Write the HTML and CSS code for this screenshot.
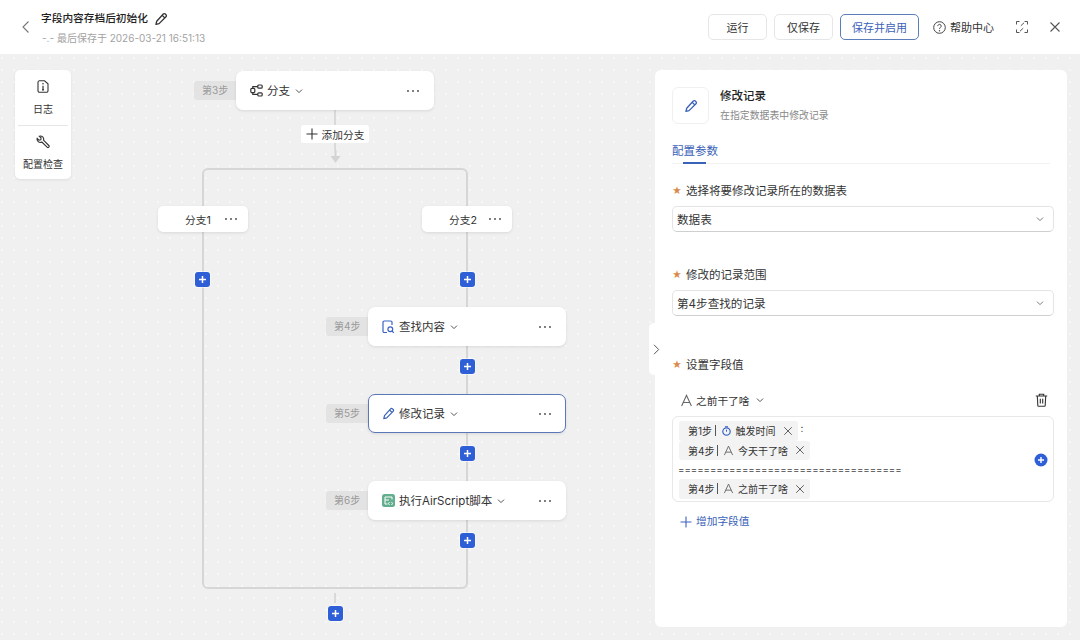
FILE: index.html
```html
<!DOCTYPE html>
<html lang="zh">
<head>
<meta charset="utf-8">
<title>字段内容存档后初始化</title>
<link rel="stylesheet" href="styles.css">
</head>
<body>
<svg class="defs" width="0" height="0">
  <symbol id="pen" viewBox="0 0 16 16"><path d="M10.600 2.300a1.600 1.600 0 0 1 2.300 0l.8.8a1.600 1.600 0 0 1 0 2.300l-7.900 7.900-3.600.9.9-3.600zM9.300 3.700l3 3" fill="none" stroke="currentColor" stroke-width="1.500" stroke-linejoin="round"/></symbol>
  <symbol id="chev" viewBox="0 0 10 10"><path d="M2 3.600l3 3 3-3" fill="none" stroke="currentColor" stroke-width="1"/></symbol>
  <symbol id="dots" viewBox="0 0 14 4"><circle cx="2" cy="2" r=".9" fill="currentColor"/><circle cx="7" cy="2" r=".9" fill="currentColor"/><circle cx="12" cy="2" r=".9" fill="currentColor"/></symbol>
  <symbol id="plus" viewBox="0 0 15 15"><path d="M7.500 4v7M4 7.500h7" stroke="#fff" stroke-width="1.500" fill="none"/></symbol>
  <symbol id="x" viewBox="0 0 12 12"><path d="M1.500 1.500l9 9M10.500 1.500l-9 9" stroke="currentColor" stroke-width="1.100" fill="none"/></symbol>
  <symbol id="a" viewBox="0 0 12 12"><path d="M1.500 11L6 1.200 10.500 11M3 7.800h6" stroke="currentColor" stroke-width="1" fill="none"/></symbol>
</svg>
<header class="topbar">
  <div class="top-left">
    <svg class="back" width="10" height="14" viewBox="0 0 10 14"><path d="M7.500 1.500L2 7l5.500 5.500" fill="none" stroke="#777" stroke-width="1.100"/></svg>
    <div class="title-block">
      <div class="title-row"><span class="title">字段内容存档后初始化</span><svg class="ico-pen" width="14" height="14"><use href="#pen"/></svg></div>
      <div class="saved">-.- 最后保存于 2026-03-21 16:51:13</div>
    </div>
  </div>
  <div class="top-right">
    <button class="btn btn-sm">运行</button>
    <button class="btn btn-sm">仅保存</button>
    <button class="btn btn-primary">保存并启用</button>
    <div class="help">
      <svg width="13" height="13" viewBox="0 0 13 13"><circle cx="6.500" cy="6.500" r="5.800" fill="none" stroke="#444" stroke-width="1"/><path d="M4.800 5.100a1.700 1.700 0 1 1 2.600 1.400c-.6.400-.9.700-.9 1.400" fill="none" stroke="#444" stroke-width="1"/><circle cx="6.500" cy="9.700" r=".7" fill="#444"/></svg>
      <span>帮助中心</span>
    </div>
    <svg class="expand" width="12" height="12" viewBox="0 0 12 12"><path d="M.5 3.500V.5h3M8.500.5h3v3M11.500 8.500v3h-3M3.500 11.500h-3v-3M4.800 4.800L8 1.800M7.200 7.200L4 10.200" fill="none" stroke="#555" stroke-width="1"/></svg>
    <svg class="close" width="12" height="12"><use href="#x"/></svg>
  </div>
</header>

<main class="work">
  <div class="canvas">
    <i class="line l-a"></i><i class="line l-b"></i>
    <svg class="arrow" width="11" height="13" viewBox="0 0 11 13"><path d="M5.500 0v7" stroke="#d4d4d4" stroke-width="2"/><path d="M.5 6h10l-5 7z" fill="#d4d4d4"/></svg>
    <i class="loop"></i>
    <i class="line l-c"></i>

    <div class="step s3"><span class="step-label">第3步</span><div class="card">
      <svg class="node-ico" width="13" height="13" viewBox="0 0 13 13"><g fill="none" stroke="#333" stroke-width="1.200"><rect x=".8" y="4.300" width="4" height="4.400" rx="1.200"/><rect x="7.800" y="1" width="4.400" height="3.200" rx="1"/><rect x="7.800" y="8.800" width="4.400" height="3.200" rx="1"/><path d="M2.800 4.300V2.600h5M2.800 8.700v1.700h5"/></g></svg>
      <span class="node-text">分支</span><svg class="chev" width="10" height="10"><use href="#chev"/></svg><svg class="more" width="14" height="4"><use href="#dots"/></svg></div></div>

    <div class="add-branch"><svg width="12" height="12" viewBox="0 0 12 12"><path d="M6 .5v11M.5 6h11" stroke="#333" stroke-width="1.100"/></svg><span>添加分支</span></div>

    <div class="branch b1"><span>分支1</span><svg class="more" width="14" height="4"><use href="#dots"/></svg></div>
    <div class="branch b2"><span>分支2</span><svg class="more" width="14" height="4"><use href="#dots"/></svg></div>

    <svg class="add p1" width="15" height="15"><use href="#plus"/></svg>
    <svg class="add p2" width="15" height="15"><use href="#plus"/></svg>
    <svg class="add p3" width="15" height="15"><use href="#plus"/></svg>
    <svg class="add p4" width="15" height="15"><use href="#plus"/></svg>
    <svg class="add p5" width="15" height="15"><use href="#plus"/></svg>
    <svg class="add p6" width="15" height="15"><use href="#plus"/></svg>

    <div class="step s4"><span class="step-label">第4步</span><div class="card">
      <svg class="node-ico" width="13" height="14" viewBox="0 0 13 14"><path d="M5 12.500H2.300a1.300 1.300 0 0 1-1.300-1.300V2.300A1.300 1.300 0 0 1 2.300 1h6.400A1.300 1.300 0 0 1 10 2.300V5" fill="none" stroke="#3a62c4" stroke-width="1.200"/><circle cx="8.300" cy="9.300" r="2.400" fill="none" stroke="#3a62c4" stroke-width="1.200"/><path d="M10 11l1.800 1.800" stroke="#3a62c4" stroke-width="1.200"/></svg>
      <span class="node-text">查找内容</span><svg class="chev" width="10" height="10"><use href="#chev"/></svg><svg class="more" width="14" height="4"><use href="#dots"/></svg></div></div>

    <div class="step s5"><span class="step-label">第5步</span><div class="card card-active">
      <svg class="node-ico ico-blue" width="13" height="13"><use href="#pen"/></svg>
      <span class="node-text">修改记录</span><svg class="chev" width="10" height="10"><use href="#chev"/></svg><svg class="more" width="14" height="4"><use href="#dots"/></svg></div></div>

    <div class="step s6"><span class="step-label">第6步</span><div class="card">
      <svg class="node-ico" width="13" height="13" viewBox="0 0 13 13"><rect width="13" height="13" rx="2.500" fill="#62ae8e"/><path d="M3 3h7v2.500M3 3v7h2.500M3 6h4" fill="none" stroke="#fff" stroke-width="1"/><path d="M7.500 8l-1 1.500 1 1.500M9.500 8l1 1.500-1 1.500" fill="none" stroke="#fff" stroke-width=".9"/></svg>
      <span class="node-text">执行AirScript脚本</span><svg class="chev" width="10" height="10"><use href="#chev"/></svg><svg class="more" width="14" height="4"><use href="#dots"/></svg></div></div>
  </div>

  <aside class="tools">
    <div class="tool">
      <svg width="12" height="13" viewBox="0 0 12 13"><path d="M2.300.8h5.200L11 3.800v7a1.500 1.500 0 0 1-1.500 1.500h-7A1.500 1.500 0 0 1 1 10.800V2.300A1.500 1.500 0 0 1 2.300.8z" fill="none" stroke="#333" stroke-width="1.100"/><path d="M6 5.800v4M5 9.800h2" stroke="#333" stroke-width="1.200" fill="none"/><circle cx="6" cy="3.800" r=".8" fill="#333"/></svg>
      <span>日志</span>
    </div>
    <div class="tool">
      <svg width="14" height="14" viewBox="0 0 14 14"><path d="M1.200 3.300L3 5.100l1.800-.3L5.100 3 3.300 1.200a3.200 3.200 0 0 1 4.200 4l5.300 5.300a1.200 1.200 0 0 1-1.700 1.700L5.800 7A3.200 3.200 0 0 1 1.200 3.300z" fill="none" stroke="#333" stroke-width="1.100"/></svg>
      <span>配置检查</span>
    </div>
  </aside>

  <section class="panel">
    <div class="handle"><svg width="7" height="11" viewBox="0 0 7 11"><path d="M1 .8l4.700 4.700L1 10.200" fill="none" stroke="#555" stroke-width="1"/></svg></div>
    <div class="panel-head">
      <div class="panel-ico"><svg class="ico-blue" width="14" height="14"><use href="#pen"/></svg></div>
      <div>
        <div class="panel-title">修改记录</div>
        <div class="panel-sub">在指定数据表中修改记录</div>
      </div>
    </div>
    <div class="tabs"><span class="tab">配置参数</span></div>

    <div class="field-label"><i class="star">★</i>选择将要修改记录所在的数据表</div>
    <div class="select"><span>数据表</span><svg width="10" height="10"><use href="#chev"/></svg></div>

    <div class="field-label"><i class="star">★</i>修改的记录范围</div>
    <div class="select"><span>第4步查找的记录</span><svg width="10" height="10"><use href="#chev"/></svg></div>

    <div class="field-label"><i class="star">★</i>设置字段值</div>
    <div class="field-row">
      <svg class="a-ico" width="13" height="13"><use href="#a"/></svg>
      <span class="field-name">之前干了啥</span>
      <svg class="chev" width="10" height="10"><use href="#chev"/></svg>
      <svg class="trash" width="13" height="14" viewBox="0 0 13 14"><path d="M.8 3h11.400M4.300 3V1.200h4.400V3M2.300 3l.5 9.500a.8.8 0 0 0 .8.8h5.800a.8.8 0 0 0 .8-.8l.5-9.500M5.300 5.800v4.700M7.700 5.800v4.700" fill="none" stroke="#333" stroke-width="1.100"/></svg>
    </div>
    <div class="expr">
      <div class="expr-line">
        <span class="tag">第1步<b></b><svg class="clock" width="9" height="10" viewBox="0 0 9 10"><circle cx="4.500" cy="5.500" r="3.700" fill="none" stroke="#3a62c4" stroke-width="1.200"/><path d="M3 .7h3M4.500 3.700v2" stroke="#3a62c4" stroke-width="1"/></svg><em class="em-time">触发时间</em><svg class="tag-x" width="10" height="10"><use href="#x"/></svg></span><span class="colon">:</span>
      </div>
      <div class="expr-line"><span class="tag">第4步<b></b><svg class="a-ico" width="11" height="11"><use href="#a"/></svg><em>今天干了啥</em><svg class="tag-x" width="10" height="10"><use href="#x"/></svg></span></div>
      <div class="equals">===================================</div>
      <div class="expr-line"><span class="tag">第4步<b></b><svg class="a-ico" width="11" height="11"><use href="#a"/></svg><em>之前干了啥</em><svg class="tag-x" width="10" height="10"><use href="#x"/></svg></span></div>
      <svg class="expr-add" width="14" height="14" viewBox="0 0 14 14"><circle cx="7" cy="7" r="6.500" fill="#2f5fd6"/><path d="M7 4v6M4 7h6" stroke="#fff" stroke-width="1.400"/></svg>
    </div>
    <div class="add-field"><svg width="12" height="12" viewBox="0 0 12 12"><path d="M6 .5v11M.5 6h11" stroke="#3a62c4" stroke-width="1.100"/></svg><span>增加字段值</span></div>
  </section>
</main>
</body>
</html>
```

FILE: styles.css
```css
* { box-sizing: border-box; }
html, body { margin: 0; height: 100%; }
body {
  width: 1080px;
  height: 640px;
  overflow: hidden;
  font-family: Inter, "Noto Sans CJK SC", sans-serif;
  color: #333;
  background: #f0f0f0;
  display: flex;
  flex-direction: column;
}
.defs { position: absolute; }
i, em { font-style: normal; }

.topbar {
  height: 54px;
  flex: none;
  background: #fff;
  display: flex;
  justify-content: space-between;
  align-items: center;
  padding: 0 19px 0 21px;
}
.top-left { display: flex; align-items: center; gap: 10px; }
.back { display: block; }
.title-block { display: flex; flex-direction: column; gap: 5px; margin-top: 3px; }
.title-row { display: flex; align-items: center; gap: 6px; height: 14px; }
.title { font-size: 10.700px; font-weight: 500; color: #222; line-height: 14px; }
.ico-pen { color: #333; }
.saved { font-size: 10px; color: #a3a3a3; line-height: 14px; padding-left: 1px; }
.top-right { display: flex; align-items: center; }
.btn {
  height: 26px;
  border: 1px solid #e6e6e6;
  border-radius: 5px;
  background: #fff;
  font: inherit;
  font-size: 11px;
  color: #333;
  padding: 0;
  margin-right: 7px;
}
.btn-sm { width: 59px; }
.btn-primary { width: 79px; color: #3a62b8; border-color: #5b7db9; margin-right: 14px; }
.help { display: flex; align-items: center; gap: 4px; font-size: 11px; color: #333; }
.expand { margin-left: 22px; }
.close { margin-left: 21px; color: #555; }

.work {
  position: relative;
  flex: 1;
  display: flex;
  justify-content: space-between;
  align-items: flex-start;
  padding: 16px 13px 13px 15px;
  background-color: #f0f0f0;
  background-image: radial-gradient(circle, #f7f7f7 0.8px, transparent 1.100px);
  background-size: 12px 12px;
  background-position: -4px -2px;
}

.tools {
  position: relative;
  width: 56px;
  background: #fff;
  border-radius: 5px;
  box-shadow: 0 1px 3px rgba(0,0,0,.08);
}
.tool {
  height: 55px;
  display: flex;
  flex-direction: column;
  align-items: center;
  padding-top: 10px;
  gap: 10px;
  font-size: 10px;
  line-height: 12px;
  color: #333;
}
.tool + .tool { border-top: 1px solid #e6e6e6; margin: 0 3px; height: 54px; padding-top: 9px; gap: 9px; }

.canvas { position: absolute; inset: 0; }
.line { position: absolute; width: 2px; background: #d9d9d9; }
.l-a { left: 334px; top: 56px; height: 15px; }
.l-b { left: 334px; top: 89px; height: 7px; }
.l-c { left: 334px; top: 539px; height: 10px; }
.arrow { position: absolute; left: 329.500px; top: 96px; }
.loop {
  position: absolute;
  left: 202px;
  top: 114px;
  width: 266px;
  height: 421px;
  border: 2px solid #d6d6d6;
  border-radius: 6px;
}

.step { position: absolute; display: flex; align-items: center; }
.s3 { left: 194px; top: 17px; }
.s4 { left: 326px; top: 253px; }
.s5 { left: 326px; top: 340px; }
.s6 { left: 326px; top: 427px; }
.step-label {
  width: 42px;
  height: 19px;
  padding-left: 8px;
  background: #e3e3e3;
  border-radius: 3px 0 0 3px;
  font-size: 10px;
  line-height: 19px;
  color: #9a9a9a;
}
.card {
  width: 198px;
  height: 39px;
  display: flex;
  align-items: center;
  padding: 0 14px;
  background: #fff;
  border-radius: 7px;
  box-shadow: 0 1px 3px rgba(0,0,0,.1);
}
.card-active { border: 1px solid #5a78b8; padding: 0 13px; }
.node-ico { flex: none; margin-right: 4px; }
.ico-blue { color: #3a62b8; }
.node-text { font-size: 11.500px; color: #333; line-height: 16px; }
.chev { flex: none; margin-left: 4px; color: #555; }
.more { flex: none; margin-left: auto; color: #444; }

.add-branch {
  position: absolute;
  left: 301px;
  top: 71px;
  width: 68px;
  height: 18px;
  display: flex;
  align-items: center;
  justify-content: center;
  gap: 4px;
  background: #fff;
  border-radius: 3px;
  font-size: 10.700px;
  color: #333;
}
.branch {
  position: absolute;
  top: 152px;
  width: 90px;
  height: 26px;
  display: flex;
  align-items: center;
  padding: 0 10px 0 27px;
  background: #fff;
  border-radius: 5px;
  box-shadow: 0 1px 3px rgba(0,0,0,.1);
  font-size: 10.700px;
  color: #333;
}
.b1 { left: 158px; }
.b2 { left: 422px; }
.add {
  position: absolute;
  background: #2f5fd6;
  border-radius: 3px;
  box-shadow: 0 0 0 1px rgba(255,255,255,.5);
}
.p1 { left: 195px; top: 218px; }
.p2 { left: 460px; top: 218px; }
.p3 { left: 460px; top: 305px; }
.p4 { left: 460px; top: 392px; }
.p5 { left: 460px; top: 479px; }
.p6 { left: 328px; top: 552px; }

.panel {
  position: relative;
  width: 412px;
  height: 557px;
  background: #fff;
  border-radius: 6px;
  padding: 17px 13px 0 17px;
}
.handle {
  position: absolute;
  left: -6px;
  top: 253px;
  width: 12px;
  height: 52px;
  display: flex;
  align-items: center;
  justify-content: center;
  padding-left: 2px;
  background: #fff;
  border-radius: 5px 0 0 5px;
}
.panel-head { display: flex; align-items: center; gap: 11px; }
.panel-ico {
  width: 37px;
  height: 37px;
  border: 1px solid #f0f0f0;
  border-radius: 6px;
  display: flex;
  align-items: center;
  justify-content: center;
}
.panel-title { font-size: 11.500px; font-weight: 500; color: #222; line-height: 15px; }
.panel-sub { font-size: 9.900px; color: #888; line-height: 14px; margin-top: 4px; }
.tabs {
  margin: 18px 4px 0 0;
  height: 22px;
  border-bottom: 1px solid #f2f2f2;
}
.tab {
  position: relative;
  display: block;
  width: 46px;
  font-size: 11.500px;
  line-height: 18px;
  color: #3a62b8;
}
.tab::after {
  content: "";
  position: absolute;
  left: 11px;
  top: 20px;
  width: 23px;
  height: 1.500px;
  background: #3a62b8;
}
.field-label {
  display: flex;
  align-items: center;
  height: 18px;
  margin-top: 17px;
  font-size: 11.500px;
  color: #333;
}
.star { width: 14px; font-size: 9.500px; padding-left: 0; color: #d98a4b; }
.select {
  margin-top: 7px;
  height: 26px;
  display: flex;
  align-items: center;
  justify-content: space-between;
  padding: 0 8px 0 4px;
  border: 1px solid #e4e4e4;
  border-bottom-color: #cfcfcf;
  border-radius: 5px;
  font-size: 11.600px;
  color: #333;
}
.select span { margin-top: -1px; }
.select svg { color: #777; }
.select + .field-label { margin-top: 33px; }
.select + .field-label + .select + .field-label { margin-top: 39px; }
.field-row {
  margin-top: 20px;
  height: 14px;
  display: flex;
  align-items: center;
  padding: 0 6px 0 7.500px;
}
.a-ico { color: #666; flex: none; }
.field-name { font-size: 10.700px; color: #333; margin-left: 3.500px; }
.field-row .chev { margin-left: 6px; }
.trash { margin-left: auto; }
.expr {
  position: relative;
  margin-top: 9px;
  height: 86px;
  border: 1px solid #e8e8e8;
  border-radius: 6px;
  padding: 4px 5px;
}
.expr-line { display: flex; align-items: flex-start; height: 19.500px; padding-left: 1px; }
.tag {
  display: inline-flex;
  align-items: center;
  height: 19.500px;
  padding: 0 5px 0 9px;
  background: #f3f3f3;
  border-radius: 3px;
  font-size: 10px;
  color: #333;
}
.tag b { width: 1px; height: 11px; background: #555; margin: 0 4.500px 0 3px; }
.tag em { margin: 0 7px 0 4px; white-space: nowrap; }
.tag .em-time { margin-left: 5px; }
.clock { margin-left: 1px; }
.tag-x { color: #555; }
.colon { font-size: 10px; margin-left: 3px; margin-top: 1px; line-height: 12px; color: #333; }
.equals { font-size: 9.670px; line-height: 19px; height: 19px; color: #444; white-space: nowrap; }
.expr-add { position: absolute; right: 5px; top: 36px; }
.add-field {
  display: flex;
  align-items: center;
  gap: 4px;
  margin: 13px 0 0 8px;
  font-size: 10.700px;
  line-height: 14px;
  color: #3a62b8;
}
```
